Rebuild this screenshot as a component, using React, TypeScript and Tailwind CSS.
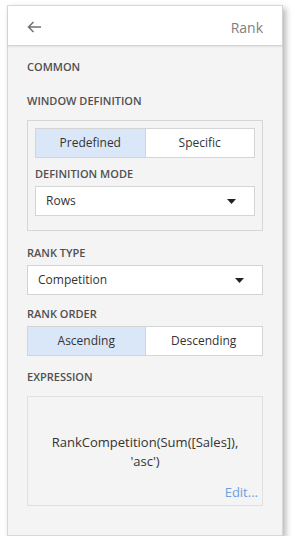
import React, { useState } from 'react';

const font = { fontFamily: '"Segoe UI", "Open Sans", sans-serif' };

const Label = ({ children, className = '' }: { children: React.ReactNode; className?: string }) => (
  <div className={`text-[11px] leading-4 font-semibold uppercase text-[#505050] ${className}`}>{children}</div>
);

const Toggle = ({ options, value, onChange }: { options: string[]; value: string; onChange: (v: string) => void }) => (
  <div className="flex h-[30px] border border-[#d4d4d4] bg-white">
    {options.map((opt, i) => (
      <button
        key={opt}
        onClick={() => onChange(opt)}
        className={`flex-1 text-[12px] text-[#333] ${i > 0 ? 'border-l border-[#d4d4d4]' : ''} ${value === opt ? 'bg-[#dae7f8]' : 'bg-white'}`}
      >
        {opt}
      </button>
    ))}
  </div>
);

const Select = ({ value }: { value: string }) => (
  <div className="flex items-center justify-between h-[30px] border border-[#d4d4d4] bg-white pl-[10px] pr-[18px]">
    <span className="text-[12px] text-[#333]">{value}</span>
    <svg width="9" height="5" viewBox="0 0 9 5">
      <path d="M0 0 L9 0 L4.5 5 Z" fill="#222" />
    </svg>
  </div>
);

export default function App() {
  const [definition, setDefinition] = useState('Predefined');
  const [order, setOrder] = useState('Ascending');

  return (
    <div className="pl-[7px] pt-[5px]" style={font}>
      <div className="w-[276px] h-[531px] bg-[#f4f4f4] border border-[#d8d8d8] shadow-[3px_3px_6px_rgba(0,0,0,0.28)] flex flex-col">
        {/* Header */}
        <div className="h-[40px] bg-white border-b border-[#d2d2d2] shadow-[0_1px_2px_rgba(0,0,0,0.08)] flex items-center justify-between pl-[19px] pr-[19px] pt-[3px]">
          <svg width="15" height="12" viewBox="0 0 15 12">
            <path d="M14 6 H2 M6.5 1 L1.5 6 L6.5 11" stroke="#707070" strokeWidth="1.5" fill="none" />
          </svg>
          <span className="text-[14px] text-[#808080]">Rank</span>
        </div>

        {/* Body */}
        <div className="px-[19px] pt-[13px]">
          <Label className="text-[#8a8a8a]">Common</Label>
          <Label className="mt-[18px]">Window Definition</Label>

          <div className="mt-[11px] border border-[#d6d6d6] px-[7px] pt-[7px] pb-[14px]">
            <Toggle options={['Predefined', 'Specific']} value={definition} onChange={setDefinition} />
            <Label className="mt-[8px]">Definition Mode</Label>
            <div className="mt-[4px]">
              <Select value="Rows" />
            </div>
          </div>

          <Label className="mt-[14px]">Rank Type</Label>
          <div className="mt-[4px]">
            <Select value="Competition" />
          </div>

          <Label className="mt-[11px]">Rank Order</Label>
          <div className="mt-[4px]">
            <Toggle options={['Ascending', 'Descending']} value={order} onChange={setOrder} />
          </div>

          <Label className="mt-[13px]">Expression</Label>
          <div className="mt-[11px] h-[110px] border border-[#e0e0e0] flex flex-col">
            <div className="flex-1 flex items-center justify-center text-center text-[13px] leading-[19px] text-[#333] px-2 pt-[22px]">
              RankCompetition(Sum([Sales]), 'asc')
            </div>
            <div className="text-right text-[13px] leading-4 text-[#6a9fe0] pr-[4px] pb-[5px]">Edit...</div>
          </div>
        </div>
      </div>
    </div>
  );
}
